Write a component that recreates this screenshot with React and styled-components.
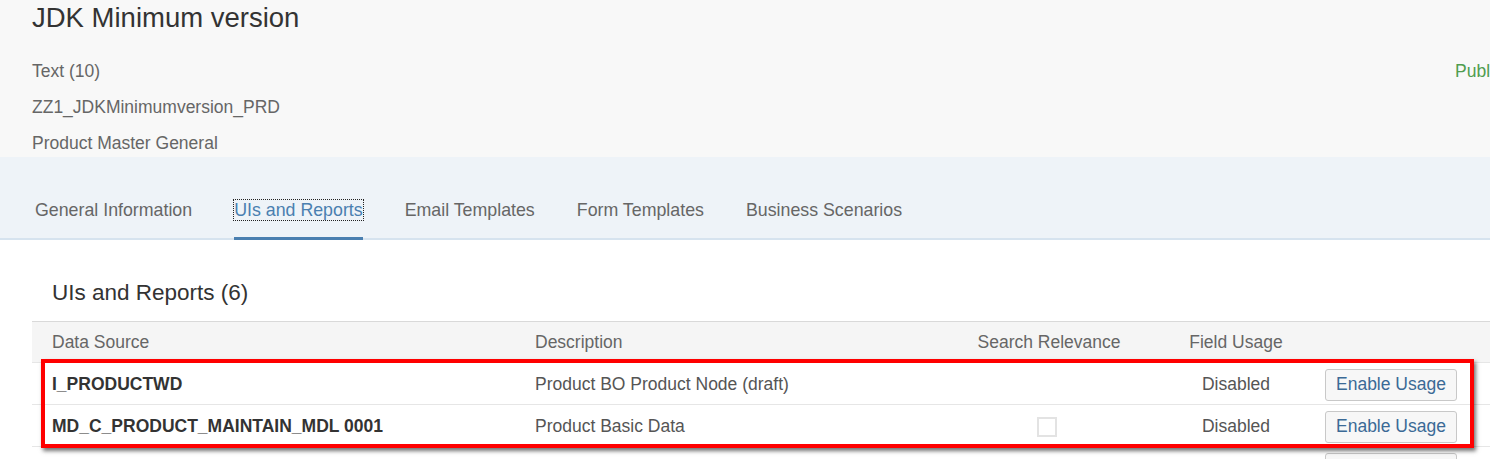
import React from "react";
import styled, {createGlobalStyle} from "styled-components";

const GlobalStyle = createGlobalStyle`
  html, body {
    margin: 0;
    padding: 0;
    overflow: hidden;
    background: #ffffff;
    font-family: "Liberation Sans", Arial, sans-serif;
  }
`;

const Page = styled.div`
  min-width: 1560px;
`;

const Header = styled.div`
  background: #f8f8f8;
  padding: 0 0 3px 32px;
`;

const Title = styled.h1`
  margin: 0 0 24px;
  font-size: 27.5px;
  font-weight: normal;
  line-height: 36px;
  color: #333333;
`;

const InfoRow = styled.div`
  display: grid;
  grid-template-columns: 1423px auto;
`;

const InfoList = styled.div`
  display: flex;
  flex-direction: column;
  gap: 14px;
`;

const InfoLine = styled.div`
  font-size: 17.5px;
  line-height: 22px;
  color: #666666;
`;

const Status = styled.div`
  font-size: 17.5px;
  line-height: 22px;
  color: #4f9d4f;
`;

const TabBar = styled.div`
  display: flex;
  align-items: flex-end;
  gap: 42px;
  height: 83px;
  padding-left: 35px;
  background: #eef3f8;
  box-shadow: inset 0 -2px 0 #d6e3ef;
  box-sizing: border-box;
`;

const Tab = styled.div`
  height: 50px;
  box-sizing: border-box;
  padding-top: 3px;
  font-size: 17.8px;
  line-height: 34px;
  color: ${p => (p.active ? "#4a7fb0" : "#666666")};
  border-bottom: 3px solid ${p => (p.active ? "#4a7fb0" : "transparent")};
`;

const TabLabel = styled.span`
  outline: ${p => (p.focused ? "1px dotted #222" : "none")};
  outline-offset: 0;
`;

const Content = styled.div`
  padding: 39px 0 0 32px;
`;

const SectionTitle = styled.h2`
  margin: 0 0 14px 20px;
  font-size: 22.5px;
  font-weight: normal;
  line-height: 28px;
  color: #333333;
`;

const TableWrap = styled.div`
  position: relative;
`;

const Row = styled.div`
  display: grid;
  grid-template-columns: 483px 435px 198px 176px 1fr;
  align-items: center;
  box-sizing: border-box;
  height: 42px;
  padding-top: ${p => (p.head ? 0 : "2px")};
  background: ${p => (p.head ? "#f5f5f5" : "#ffffff")};
  border-top: ${p => (p.head ? "1px solid #d9d9d9" : "none")};
  border-bottom: 1px solid #e6e6e6;
  font-size: 17.5px;
  color: ${p => (p.head ? "#666666" : "#555555")};
`;

const Cell = styled.div`
  padding-left: ${p => (p.center ? 0 : "20px")};
  font-weight: ${p => (p.bold ? "bold" : "normal")};
  color: ${p => (p.bold ? "#333333" : "inherit")};
  white-space: nowrap;
  display: flex;
  justify-content: ${p => (p.center ? "center" : "flex-start")};
  align-items: center;
`;

const ActionCell = styled.div`
  padding-left: 1px;
  display: flex;
  align-items: center;
`;

const Checkbox = styled.span`
  display: inline-block;
  width: 16px;
  height: 16px;
  border: 2px solid #e3e3e3;
  background: #ffffff;
  margin-left: -4px;
`;

const Button = styled.button`
  height: 32px;
  padding: 0 10px;
  border: 1px solid #c8c8c8;
  border-radius: 3px;
  background: #f7f7f7;
  color: #3b6a96;
  font-family: "Liberation Sans", Arial, sans-serif;
  font-size: 17.5px;
  cursor: pointer;
`;

const Highlight = styled.div`
  position: absolute;
  left: 9px;
  top: 38px;
  width: 1433px;
  height: 89px;
  box-sizing: border-box;
  border: 4px solid #ff0000;
  box-shadow: 2px 3px 4px rgba(0, 0, 0, 0.55);
  pointer-events: none;
`;

const tabs = [
    "General Information",
    "UIs and Reports",
    "Email Templates",
    "Form Templates",
    "Business Scenarios",
];

const rows = [
    {source: "I_PRODUCTWD", desc: "Product BO Product Node (draft)", check: false},
    {source: "MD_C_PRODUCT_MAINTAIN_MDL 0001", desc: "Product Basic Data", check: true},
    {source: "MD_C_PRODUCT_MAINTAIN_MDL 0002", desc: "Product Plant Data", check: true},
];

function App() {
    return (
        <Page>
            <GlobalStyle/>
            <Header>
                <Title>JDK Minimum version</Title>
                <InfoRow>
                    <InfoList>
                        <InfoLine>Text (10)</InfoLine>
                        <InfoLine>ZZ1_JDKMinimumversion_PRD</InfoLine>
                        <InfoLine>Product Master General</InfoLine>
                    </InfoList>
                    <Status>Published</Status>
                </InfoRow>
            </Header>
            <TabBar>
                {tabs.map((t, i) => (
                    <Tab key={t} active={i === 1}>
                        <TabLabel focused={i === 1}>{t}</TabLabel>
                    </Tab>
                ))}
            </TabBar>
            <Content>
                <SectionTitle>UIs and Reports (6)</SectionTitle>
                <TableWrap>
                    <Row head>
                        <Cell>Data Source</Cell>
                        <Cell>Description</Cell>
                        <Cell center>Search Relevance</Cell>
                        <Cell center>Field Usage</Cell>
                        <Cell/>
                    </Row>
                    {rows.map(r => (
                        <Row key={r.source}>
                            <Cell bold>{r.source}</Cell>
                            <Cell>{r.desc}</Cell>
                            <Cell center>{r.check && <Checkbox/>}</Cell>
                            <Cell center>Disabled</Cell>
                            <ActionCell><Button>Enable Usage</Button></ActionCell>
                        </Row>
                    ))}
                    <Highlight/>
                </TableWrap>
            </Content>
        </Page>
    );
}

export default App;
